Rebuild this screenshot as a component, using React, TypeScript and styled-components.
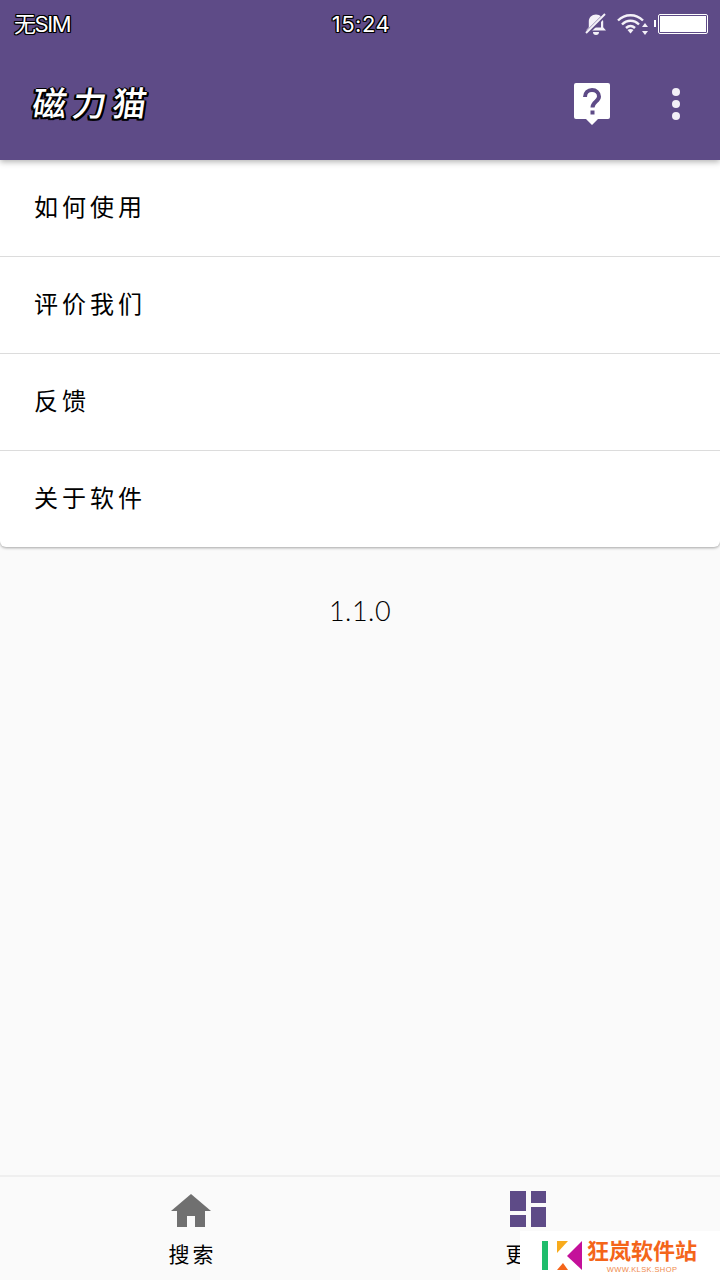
import React from "react";
import styled, { createGlobalStyle } from "styled-components";

const GlobalStyle = createGlobalStyle`
    html, body {
        margin: 0;
        padding: 0;
        background: #fafafa;
    }
`;

const cjk = `"Noto Sans CJK SC", "Noto Sans", sans-serif`;

const Page = styled.div`
    position: relative;
    width: 720px;
    height: 1280px;
    overflow: hidden;
    display: flex;
    flex-direction: column;
    background: #fafafa;
    font-family: ${cjk};
    color: #000;
`;

const Header = styled.header`
    height: 160px;
    flex-shrink: 0;
    display: flex;
    flex-direction: column;
    background: #5e4b87;
    box-shadow: 0 2px 6px rgba(0, 0, 0, 0.3);
    position: relative;
    z-index: 2;
`;

const StatusBar = styled.div`
    height: 48px;
    display: grid;
    grid-template-columns: 1fr auto 1fr;
    align-items: center;
    padding: 0 12px 0 14px;
`;

const StatusText = styled.span<{ $spacing: number }>`
    font-family: "Inter", ${cjk};
    font-size: 22px;
    line-height: 48px;
    letter-spacing: ${props => props.$spacing}px;
    color: #fff;
    text-shadow: -1px 0 #000, 1px 0 #000, 0 -1px #000, 0 1px #000, -1px -1px #000, 1px 1px #000, 1px -1px #000, -1px 1px #000, 0 0 2px #000;
`;

const StatusIcons = styled.div`
    justify-self: end;
    display: flex;
    align-items: center;
    gap: 9px;
`;

const Battery = styled.div`
    position: relative;
    width: 46px;
    height: 16px;
    border: 1px solid #fff;
    border-radius: 2px;
    padding: 1px;
    display: flex;
    &::before {
        content: "";
        position: absolute;
        left: -5px;
        top: 5px;
        width: 2px;
        height: 7px;
        background: #fff;
    }
`;

const BatteryFill = styled.div`
    flex: 1;
    background: #fff;
`;

const ActionBar = styled.div`
    flex: 1;
    display: flex;
    align-items: center;
    padding: 0 40px 0 33px;
`;

const Title = styled.h1`
    flex: 1;
    margin: 0 0 4px;
    font-size: 34px;
    font-weight: 500;
    letter-spacing: 6px;
    line-height: 44px;
    color: #fff;
    transform: skewX(-8deg);
    text-shadow: -2px 0 #000, 2px 0 #000, 0 -1px #000, 0 2px #000, -2px 1px #000, 2px 1px #000, 2px 2px #000, -2px 2px #000;
`;

const Actions = styled.div`
    display: flex;
    align-items: center;
    gap: 62px;
`;

const Dots = styled.div`
    display: flex;
    flex-direction: column;
    gap: 4px;
`;

const Dot = styled.span`
    width: 8px;
    height: 8px;
    border-radius: 50%;
    background: #f2eff7;
`;

const Card = styled.section`
    background: #fff;
    border-radius: 0 0 6px 6px;
    box-shadow: 0 1px 3px rgba(0, 0, 0, 0.35);
    flex-shrink: 0;
`;

const Row = styled.div`
    height: 97px;
    display: flex;
    align-items: center;
    padding: 0 34px 6px;
    box-sizing: border-box;
    font-size: 24px;
    letter-spacing: 4px;
    border-bottom: 1px solid #dcdcdc;
    &:last-child {
        height: 96px;
        border-bottom: 0;
    }
`;

const Version = styled.div`
    padding-top: 46px;
    text-align: center;
    font-family: "Lato", sans-serif;
    font-size: 27px;
    font-weight: 300;
    line-height: 36px;
    letter-spacing: 0.5px;
`;

const Spacer = styled.div`
    flex: 1;
`;

const BottomNav = styled.nav`
    height: 105px;
    flex-shrink: 0;
    display: grid;
    grid-template-columns: 1fr 1fr;
    border-top: 2px solid #efefef;
    box-sizing: border-box;
`;

const NavItem = styled.div<{ $left?: number; $right?: number }>`
    display: flex;
    flex-direction: column;
    align-items: center;
    padding: 13px ${props => props.$right || 0}px 0 ${props => props.$left || 0}px;
`;

const NavIcon = styled.div`
    height: 38px;
    display: flex;
    align-items: flex-end;
`;

const NavLabel = styled.span`
    margin: 10px -3px 0 0;
    font-size: 21px;
    line-height: 30px;
    letter-spacing: 3px;
`;

const Watermark = styled.div`
    position: absolute;
    right: 0;
    bottom: 0;
    width: 200px;
    height: 49px;
    background: #fff;
    display: flex;
    align-items: center;
    gap: 5px;
    padding-left: 22px;
    box-sizing: border-box;
`;

const WatermarkText = styled.div`
    display: flex;
    flex-direction: column;
    align-items: center;
`;

const WatermarkName = styled.span`
    font-size: 22px;
    font-weight: 700;
    line-height: 24px;
    color: #f4651a;
`;

const WatermarkUrl = styled.span`
    margin-top: 4px;
    font-family: "Liberation Sans", sans-serif;
    font-size: 7.5px;
    line-height: 10px;
    letter-spacing: 0.4px;
    color: #f08a4b;
`;

const menuItems = ["如何使用", "评价我们", "反馈", "关于软件"];

const MuteIcon = () => (
    <svg width="24" height="24" viewBox="0 0 24 24">
        <path d="M2 18.500h20l-2.800-3.200V9.500C19.200 5.500 16.200 2.500 12 2.500S4.800 5.500 4.800 9.500v5.800z" fill="#f4f1f8" />
        <path d="M9 20h6a3 3 0 0 1-6 0z" fill="#f4f1f8" />
        <path d="M6.500 16L17 5.500V15.500H7z" fill="#5e4b87" />
        <path d="M3 21L22 2" stroke="#5e4b87" strokeWidth="4" />
        <path d="M2 21L21 2" stroke="#f4f1f8" strokeWidth="2" />
    </svg>
);

const WifiIcon = () => (
    <svg width="32" height="24" viewBox="0 0 32 24">
        <g fill="none" stroke="#f4f1f8" strokeWidth="2.400">
            <path d="M1 8.500C8 1.500 19 1.500 26 8.500" />
            <path d="M5 12.500C10 7.500 17 7.500 22 12.500" />
            <path d="M9 16C11.800 13.400 15.200 13.400 18 16" />
        </g>
        <path d="M13.500 21.500L10.500 18c1.800-1.400 4.200-1.400 6 0z" fill="#f4f1f8" />
        <path d="M28 11l3 4h-6zM28 23l3-4h-6z" fill="#f4f1f8" />
    </svg>
);

const HelpIcon = () => (
    <svg width="36" height="42" viewBox="0 0 36 42">
        <path d="M2 0h32a2 2 0 0 1 2 2v32a2 2 0 0 1-2 2H24l-6 6-6-6H2a2 2 0 0 1-2-2V2a2 2 0 0 1 2-2z" fill="#fff" />
        <path d="M11 14c0-4 3-7 7-7s7 2.800 7 6.500c0 5-6.500 5-6.500 11" fill="none" stroke="#5e4b87" strokeWidth="4" />
        <rect x="16.500" y="27.500" width="4" height="4" fill="#5e4b87" />
    </svg>
);

const HomeIcon = () => (
    <svg width="40" height="36" viewBox="0 0 40 36">
        <path d="M20 2L40 19H0z" fill="#707070" />
        <path d="M6 19h28v16H24V24h-8v11H6z" fill="#707070" />
    </svg>
);

const MoreIcon = () => (
    <svg width="37" height="37" viewBox="0 0 37 37">
        <g fill="#5e4b87">
            <rect x="0" y="0" width="16" height="20" />
            <rect x="21" y="0" width="15" height="12" />
            <rect x="0" y="24" width="16" height="12" />
            <rect x="21" y="16" width="15" height="20" />
        </g>
    </svg>
);

const KlskLogo = () => (
    <svg width="40" height="30" viewBox="0 0 40 30">
        <rect x="0" y="0" width="6" height="29" fill="#1fbd6c" />
        <path d="M15 0h11L15 12z" fill="#f8ab1c" />
        <path d="M40 0v29L25 15z" fill="#c4109a" />
        <path d="M15 29l6-7 5 7z" fill="#f4651a" />
    </svg>
);

const App = () => {
    return (
        <Page>
            <GlobalStyle />
            <Header>
                <StatusBar>
                    <StatusText $spacing={-1.4}>无SIM</StatusText>
                    <StatusText $spacing={0.5}>15:24</StatusText>
                    <StatusIcons>
                        <MuteIcon />
                        <WifiIcon />
                        <Battery>
                            <BatteryFill />
                        </Battery>
                    </StatusIcons>
                </StatusBar>
                <ActionBar>
                    <Title>磁力猫</Title>
                    <Actions>
                        <HelpIcon />
                        <Dots>
                            <Dot />
                            <Dot />
                            <Dot />
                        </Dots>
                    </Actions>
                </ActionBar>
            </Header>
            <Card>
                {menuItems.map(item => (
                    <Row key={item}>{item}</Row>
                ))}
            </Card>
            <Version>1.1.0</Version>
            <Spacer />
            <BottomNav>
                <NavItem $left={22}>
                    <NavIcon><HomeIcon /></NavIcon>
                    <NavLabel>搜索</NavLabel>
                </NavItem>
                <NavItem $right={24}>
                    <NavIcon><MoreIcon /></NavIcon>
                    <NavLabel>更多</NavLabel>
                </NavItem>
            </BottomNav>
            <Watermark>
                <KlskLogo />
                <WatermarkText>
                    <WatermarkName>狂岚软件站</WatermarkName>
                    <WatermarkUrl>WWW.KLSK.SHOP</WatermarkUrl>
                </WatermarkText>
            </Watermark>
        </Page>
    );
};

export default App;
